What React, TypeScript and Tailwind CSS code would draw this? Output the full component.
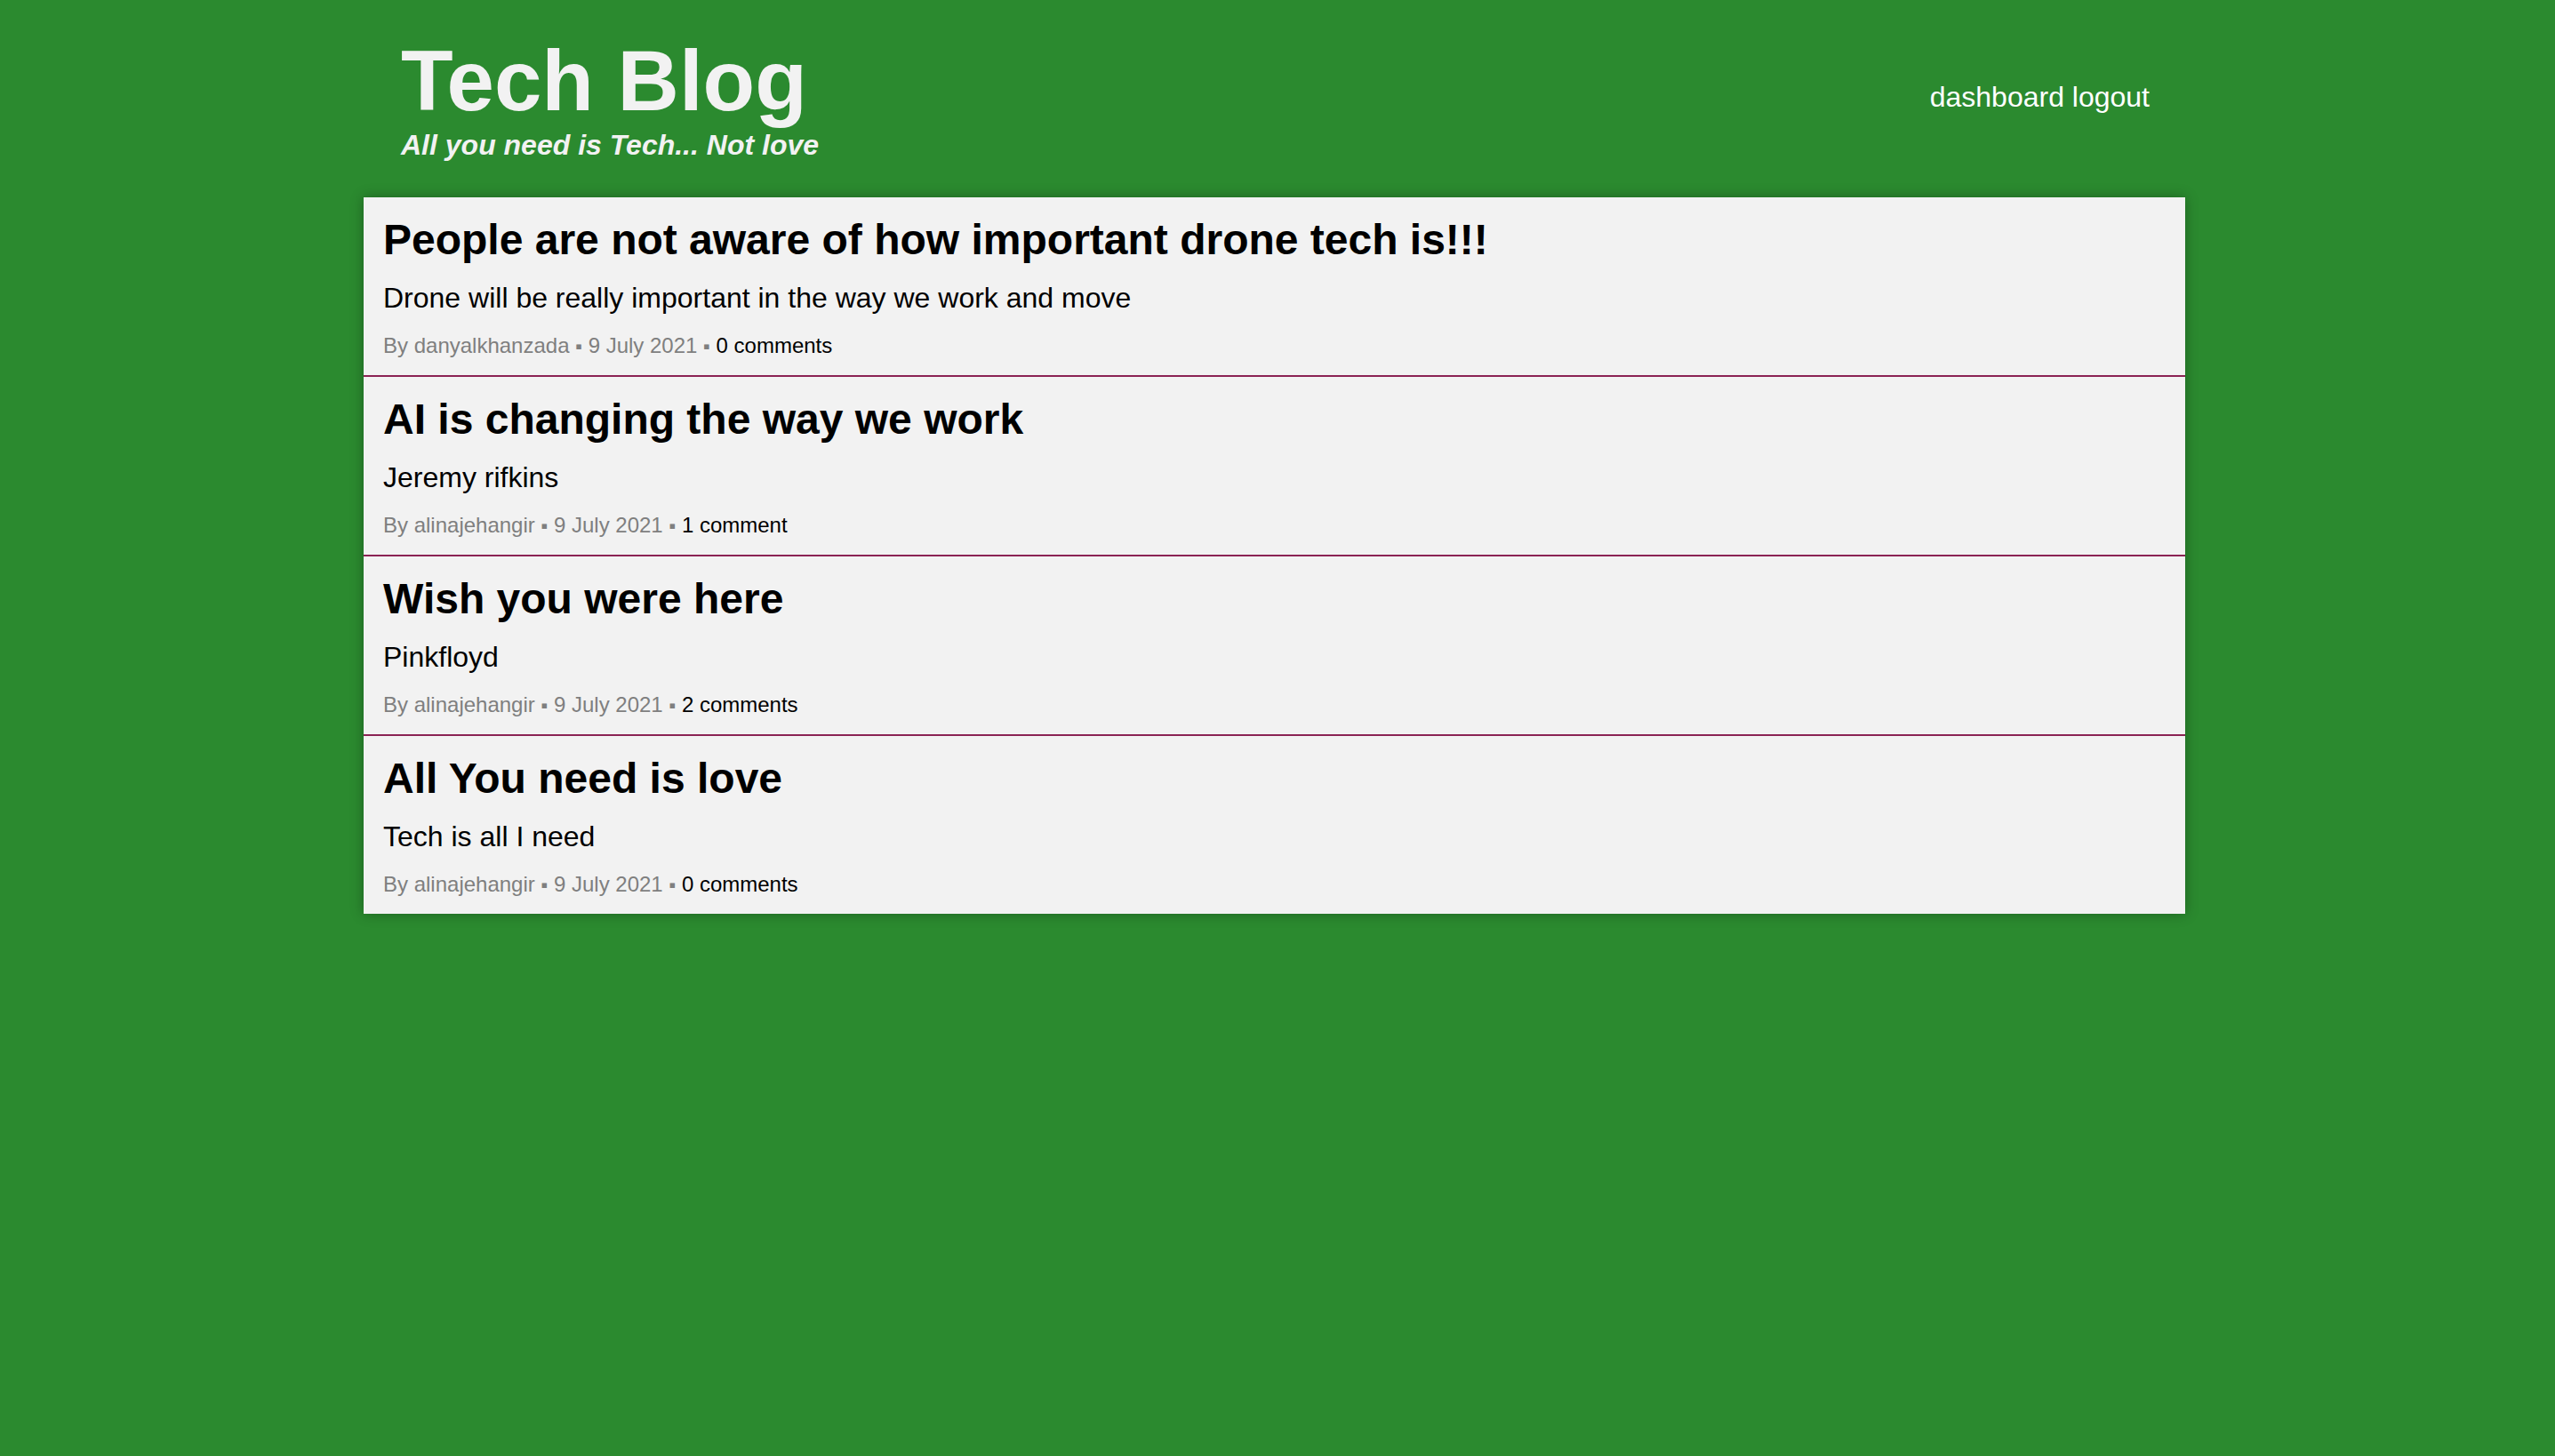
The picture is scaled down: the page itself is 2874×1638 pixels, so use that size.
import React from "react";

interface Post {
  title: string;
  body: string;
  author: string;
  date: string;
  comments: string;
}

const posts: Post[] = [
  {
    title: "People are not aware of how important drone tech is!!!",
    body: "Drone will be really important in the way we work and move",
    author: "danyalkhanzada",
    date: "9 July 2021",
    comments: "0 comments",
  },
  {
    title: "AI is changing the way we work",
    body: "Jeremy rifkins",
    author: "alinajehangir",
    date: "9 July 2021",
    comments: "1 comment",
  },
  {
    title: "Wish you were here",
    body: "Pinkfloyd",
    author: "alinajehangir",
    date: "9 July 2021",
    comments: "2 comments",
  },
  {
    title: "All You need is love",
    body: "Tech is all I need",
    author: "alinajehangir",
    date: "9 July 2021",
    comments: "0 comments",
  },
];

function PostItem({ post, last }: { post: Post; last: boolean }) {
  return (
    <article
      className={
        last
          ? "h-[200px] px-[22px] pt-[20px]"
          : "h-[202px] px-[22px] pt-[20px] border-b-2 border-[#8b2354]"
      }
    >
      <h2 className="text-[48px] leading-[56px] font-bold text-black">
        {post.title}
      </h2>
      <p className="mt-[17px] text-[32px] leading-[40px] text-black">
        {post.body}
      </p>
      <p className="mt-[20px] text-[24px] leading-[28px] text-[#7f7f7f]">
        By {post.author} <span className="text-[22px]">▪</span> {post.date}{" "}
        <span className="text-[22px]">▪</span>{" "}
        <a href="#" className="text-black">
          {post.comments}
        </a>
      </p>
    </article>
  );
}

export default function App() {
  return (
    <div
      className="min-h-[1638px] w-full bg-[#2b8a2f]"
      style={{ fontFamily: '"Liberation Sans", Arial, Helvetica, sans-serif' }}
    >
      <div className="ml-[409px] w-[2049px]">
        {/* Header */}
        <header className="h-[222px] pl-[42px] pr-[40px] flex justify-between items-start">
          <div className="pt-[43px]">
            <h1 className="text-[96px] leading-none font-bold text-[#f2f2f2]">
              Tech Blog
            </h1>
            <p className="mt-[8px] text-[32px] leading-none font-bold italic text-[#f2f2f2]">
              All you need is Tech... Not love
            </p>
          </div>
          <nav className="pt-[93px] text-[32px] leading-none text-white">
            <a href="#">dashboard</a> <a href="#">logout</a>
          </nav>
        </header>

        {/* Posts */}
        <main className="bg-[#f2f2f2] shadow-[0_0_14px_rgba(0,0,0,0.3)]">
          {posts.map((post, i) => (
            <PostItem key={i} post={post} last={i === posts.length - 1} />
          ))}
        </main>
      </div>
    </div>
  );
}
